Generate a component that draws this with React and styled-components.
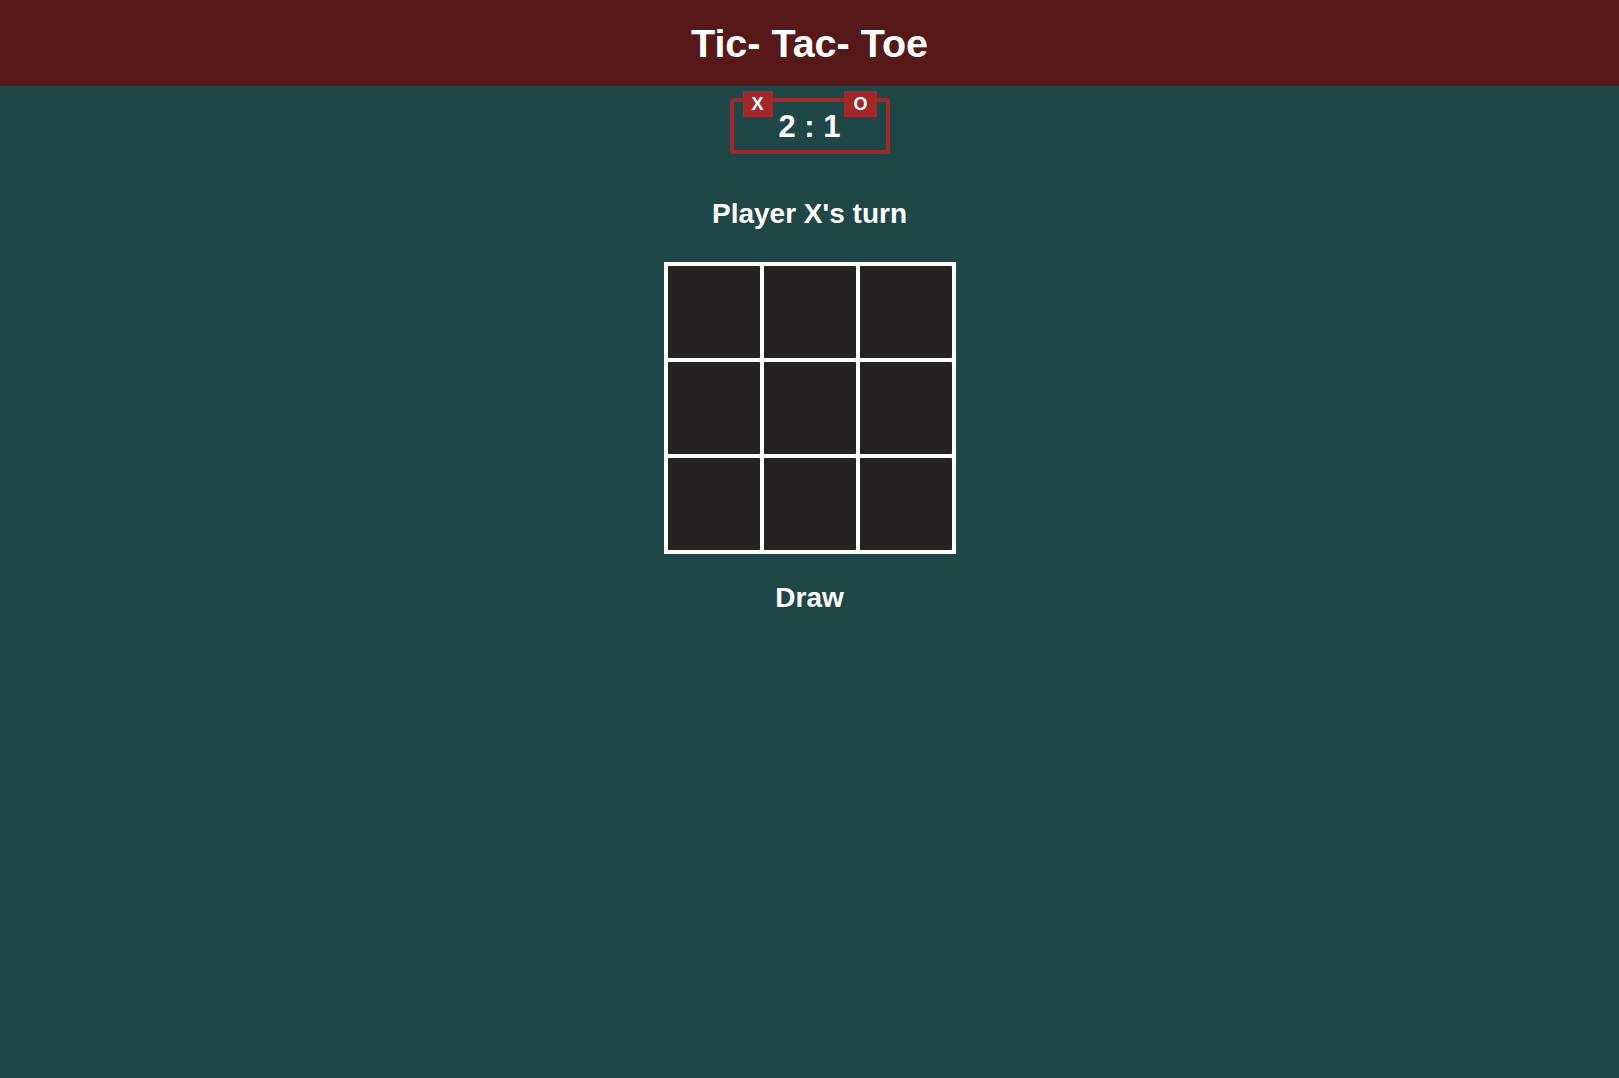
import React, { useState } from 'react';
import styled, { createGlobalStyle } from 'styled-components';

const GlobalStyle = createGlobalStyle`
	html, body {
		margin: 0;
		padding: 0;
		background-color: #1f4748;
		font-family: "Liberation Sans", Arial, sans-serif;
	}
`;

const App = () => {
	const [board, setBoard] = useState(Array(9).fill(null));
	const [xIsNext, setXIsNext] = useState(true);

	const handleClick = (i) => {
		if (board[i]) return;
		const next = board.slice();
		next[i] = xIsNext ? 'X' : 'O';
		setBoard(next);
		setXIsNext(!xIsNext);
	};

	return (
		<Page>
			<GlobalStyle />
			<Header>
				<Title>Tic- Tac- Toe</Title>
			</Header>

			<Score>
				<Badge side='left'>X</Badge>
				2 : 1
				<Badge side='right'>O</Badge>
			</Score>

			<Turn>Player {xIsNext ? 'X' : 'O'}'s turn</Turn>

			<Board>
				{board.map((value, i) => (
					<Cell key={i}>
						<Square onClick={() => handleClick(i)}>{value}</Square>
					</Cell>
				))}
			</Board>

			<Status>Draw</Status>
		</Page>
	);
};

export default App;

const Page = styled.div`
	min-height: 100vh;
	display: flex;
	flex-direction: column;
	align-items: center;
	color: #ffffff;
`;

const Header = styled.header`
	width: 100%;
	height: 86px;
	background-color: #561819;
	display: flex;
	align-items: center;
	justify-content: center;
`;

const Title = styled.h1`
	margin: 0;
	font-size: 39.5px;
	font-weight: bold;
	color: #ffffff;
`;

const Score = styled.div`
	position: relative;
	box-sizing: border-box;
	width: 160px;
	height: 56px;
	margin-top: 12px;
	border: 4px solid #a1292b;
	border-radius: 4px;
	display: flex;
	align-items: flex-end;
	justify-content: center;
	padding-bottom: 8px;
	font-size: 31px;
	font-weight: bold;
	line-height: 1;
`;

const Badge = styled.span`
	position: absolute;
	top: -11px;
	${({ side }) => (side === 'left' ? 'left: 9px;' : 'right: 9px;')}
	padding: 3px 9px;
	background-color: #a1292b;
	font-size: 18px;
	font-weight: bold;
	line-height: 20px;
`;

const Turn = styled.h2`
	margin: 44px 0 0;
	font-size: 28px;
	font-weight: bold;
	line-height: 32px;
`;

const Board = styled.div`
	margin-top: 32px;
	display: grid;
	grid-template-columns: repeat(3, 92px);
	grid-template-rows: repeat(3, 92px);
	gap: 4px;
	padding: 4px;
	background-color: #ffffff;
`;

const Cell = styled.div`
	background-color: #1f4748;
`;

const Square = styled.button`
	width: 100%;
	height: 100%;
	border: none;
	border-radius: 3px;
	background-color: #242223;
	color: #ffffff;
	font-family: inherit;
	font-size: 48px;
	font-weight: bold;
	cursor: pointer;
`;

const Status = styled.h2`
	margin: 28px 0 0;
	font-size: 28px;
	font-weight: bold;
	line-height: 32px;
`;
